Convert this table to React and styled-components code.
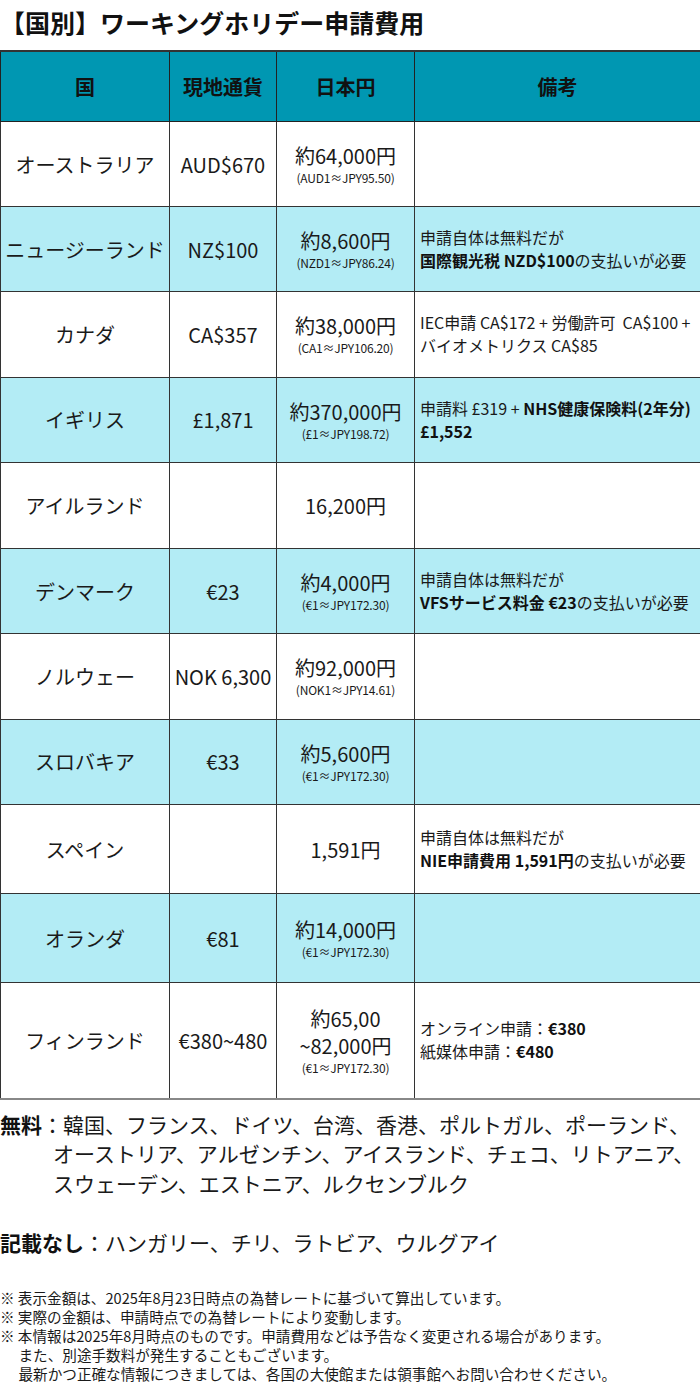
import React from "react";
import styled, { createGlobalStyle } from "styled-components";

const Global = createGlobalStyle`
  body {
    margin: 0;
    background: #fff;
    color: #1a1a1a;
    font-family: "Noto Sans CJK JP", "Noto Sans", sans-serif;
  }
`;

const Page = styled.div`
  width: 700px;
`;

const Title = styled.h1`
  margin: 0;
  padding: 7px 0 0;
  height: 43px;
  font-size: 25px;
  font-weight: 700;
  line-height: 30px;
  color: #111;
`;

const Table = styled.table`
  width: 700px;
  border-collapse: collapse;
  table-layout: fixed;
  border-top: 2px solid #333;
  border-bottom: 2px solid #888;
`;

const Head = styled.th`
  height: 69px;
  padding: 0;
  background: #0097b2;
  border: 1px solid #222;
  font-size: 20px;
  font-weight: 700;
  color: #111;
`;

const Row = styled.tr`
  background: ${(p) => (p.$alt ? "#b3ecf5" : "#fff")};
  height: ${(p) => p.$h}px;
`;

const Cell = styled.td`
  padding: 0 4px;
  border: 1px solid #333;
  text-align: center;
  vertical-align: middle;
  font-size: 20px;
  line-height: 27px;
  color: #1a1a1a;
`;

const Rate = styled.div`
  font-size: 12px;
  line-height: 17px;
  letter-spacing: -0.2px;
`;

const Note = styled.td`
  padding: 0 4px 0 5px;
  border: 1px solid #333;
  vertical-align: middle;
  font-size: 16px;
  line-height: 23px;
  color: #1a1a1a;
  white-space: nowrap;

  b {
    font-weight: 700;
    color: #111;
  }
`;

const Lists = styled.div`
  padding-top: 10px;
`;

const ListLine = styled.p`
  margin: 0 0 ${(p) => p.$gap || 0}px;
  padding-left: 53px;
  text-indent: -53px;
  font-size: 21px;
  line-height: 29.5px;
  color: #1a1a1a;

  b {
    font-weight: 700;
    color: #111;
  }
`;

const Notes = styled.div`
  margin-top: 31px;
  font-size: 14.6px;
  line-height: 19px;
  color: #1a1a1a;
`;

const NoteLine = styled.div`
  padding-left: ${(p) => (p.$cont ? "18.5px" : "0")};
`;

const rows = [
  { name: "オーストラリア", local: "AUD$670", yen: "約64,000円", rate: "(AUD1≈JPY95.50)", h: 85 },
  {
    name: "ニュージーランド",
    local: "NZ$100",
    yen: "約8,600円",
    rate: "(NZD1≈JPY86.24)",
    h: 85,
    note: (
      <>
        申請自体は無料だが
        <br />
        <b>国際観光税 NZD$100</b>の支払いが必要
      </>
    ),
  },
  {
    name: "カナダ",
    local: "CA$357",
    yen: "約38,000円",
    rate: "(CA1≈JPY106.20)",
    h: 85.5,
    note: (
      <>
        IEC申請 CA$172 + 労働許可&nbsp; CA$100 +
        <br />
        バイオメトリクス CA$85
      </>
    ),
  },
  {
    name: "イギリス",
    local: "£1,871",
    yen: "約370,000円",
    rate: "(£1≈JPY198.72)",
    h: 85.5,
    note: (
      <>
        申請料 £319 + <b>NHS健康保険料(2年分)</b>
        <br />
        <b>£1,552</b>
      </>
    ),
  },
  { name: "アイルランド", local: "", yen: "16,200円", h: 86 },
  {
    name: "デンマーク",
    local: "€23",
    yen: "約4,000円",
    rate: "(€1≈JPY172.30)",
    h: 85,
    note: (
      <>
        申請自体は無料だが
        <br />
        <b>VFSサービス料金 €23</b>の支払いが必要
      </>
    ),
  },
  { name: "ノルウェー", local: "NOK 6,300", yen: "約92,000円", rate: "(NOK1≈JPY14.61)", h: 85.5 },
  { name: "スロバキア", local: "€33", yen: "約5,600円", rate: "(€1≈JPY172.30)", h: 85.5 },
  {
    name: "スペイン",
    local: "",
    yen: "1,591円",
    h: 89,
    note: (
      <>
        申請自体は無料だが
        <br />
        <b>NIE申請費用 1,591円</b>の支払いが必要
      </>
    ),
  },
  { name: "オランダ", local: "€81", yen: "約14,000円", rate: "(€1≈JPY172.30)", h: 89 },
  {
    name: "フィンランド",
    local: "€380~480",
    yen: (
      <>
        約65,00
        <br />
        ~82,000円
      </>
    ),
    rate: "(€1≈JPY172.30)",
    h: 116,
    note: (
      <>
        オンライン申請：<b>€380</b>
        <br />
        紙媒体申請：<b>€480</b>
      </>
    ),
  },
];

export default function App() {
  return (
    <Page>
      <Global />
      <Title>【国別】ワーキングホリデー申請費用</Title>
      <Table>
        <colgroup>
          <col style={{ width: 169 }} />
          <col style={{ width: 107 }} />
          <col style={{ width: 138 }} />
          <col style={{ width: 286 }} />
        </colgroup>
        <thead>
          <tr>
            <Head>国</Head>
            <Head>現地通貨</Head>
            <Head>日本円</Head>
            <Head>備考</Head>
          </tr>
        </thead>
        <tbody>
          {rows.map((r, i) => (
            <Row key={r.name} $alt={i % 2 === 1} $h={r.h}>
              <Cell>{r.name}</Cell>
              <Cell>{r.local}</Cell>
              <Cell>
                {r.yen}
                {r.rate && <Rate>{r.rate}</Rate>}
              </Cell>
              <Note>{r.note}</Note>
            </Row>
          ))}
        </tbody>
      </Table>
      <Lists>
        <ListLine $gap={29.5}>
          <b>無料</b>：韓国、フランス、ドイツ、台湾、香港、ポルトガル、ポーランド、オーストリア、アルゼンチン、アイスランド、チェコ、リトアニア、スウェーデン、エストニア、ルクセンブルク
        </ListLine>
        <ListLine>
          <b>記載なし</b>：ハンガリー、チリ、ラトビア、ウルグアイ
        </ListLine>
      </Lists>
      <Notes>
        <NoteLine>※ 表示金額は、2025年8月23日時点の為替レートに基づいて算出しています。</NoteLine>
        <NoteLine>※ 実際の金額は、申請時点での為替レートにより変動します。</NoteLine>
        <NoteLine>※ 本情報は2025年8月時点のものです。申請費用などは予告なく変更される場合があります。</NoteLine>
        <NoteLine $cont>また、別途手数料が発生することもございます。</NoteLine>
        <NoteLine $cont>最新かつ正確な情報につきましては、各国の大使館または領事館へお問い合わせください。</NoteLine>
      </Notes>
    </Page>
  );
}
